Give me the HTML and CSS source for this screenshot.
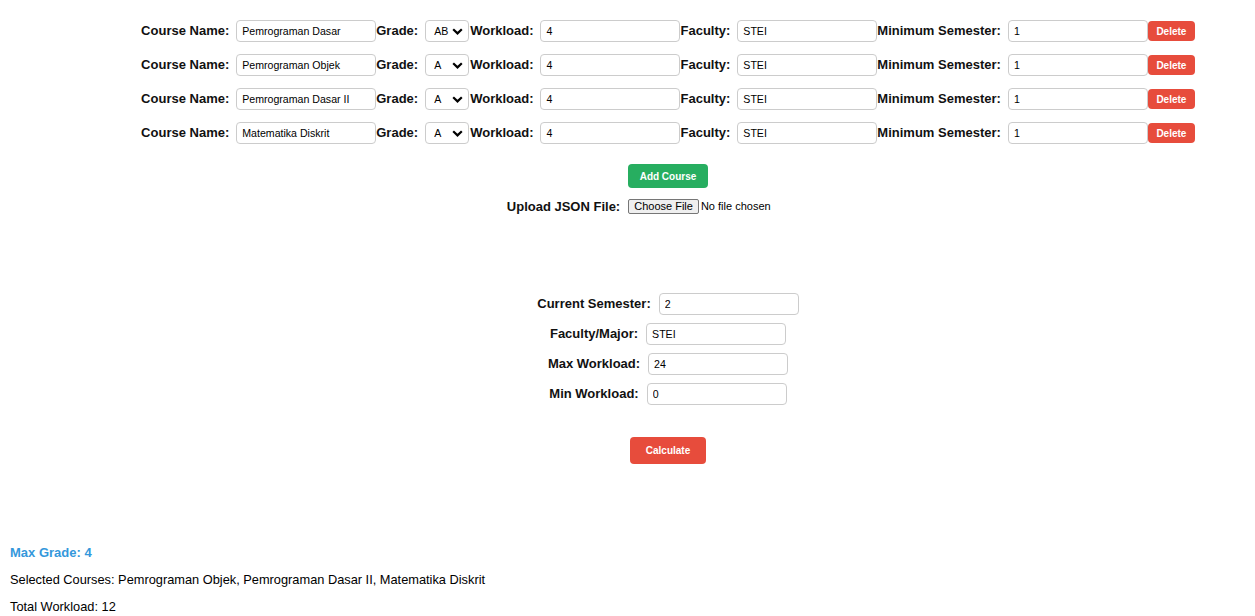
FILE: index.html
```html
<!DOCTYPE html>
<html lang="en">
<head>
<meta charset="utf-8">
<title>Course Planner</title>
<link rel="stylesheet" href="styles.css">
</head>
<body>
<div class="page">
  <div class="courses">
    <div class="course-row">
      <label class="lbl">Course Name:</label><input class="field" type="text" value="Pemrograman Dasar">
      <label class="lbl">Grade:</label><select class="grade"><option>A</option><option selected>AB</option><option>B</option></select>
      <label class="lbl">Workload:</label><input class="field" type="text" value="4">
      <label class="lbl">Faculty:</label><input class="field" type="text" value="STEI">
      <label class="lbl">Minimum Semester:</label><input class="field" type="text" value="1">
      <button class="btn btn-delete">Delete</button>
    </div>
    <div class="course-row">
      <label class="lbl">Course Name:</label><input class="field" type="text" value="Pemrograman Objek">
      <label class="lbl">Grade:</label><select class="grade"><option selected>A</option><option>AB</option><option>B</option></select>
      <label class="lbl">Workload:</label><input class="field" type="text" value="4">
      <label class="lbl">Faculty:</label><input class="field" type="text" value="STEI">
      <label class="lbl">Minimum Semester:</label><input class="field" type="text" value="1">
      <button class="btn btn-delete">Delete</button>
    </div>
    <div class="course-row">
      <label class="lbl">Course Name:</label><input class="field" type="text" value="Pemrograman Dasar II">
      <label class="lbl">Grade:</label><select class="grade"><option selected>A</option><option>AB</option><option>B</option></select>
      <label class="lbl">Workload:</label><input class="field" type="text" value="4">
      <label class="lbl">Faculty:</label><input class="field" type="text" value="STEI">
      <label class="lbl">Minimum Semester:</label><input class="field" type="text" value="1">
      <button class="btn btn-delete">Delete</button>
    </div>
    <div class="course-row">
      <label class="lbl">Course Name:</label><input class="field" type="text" value="Matematika Diskrit">
      <label class="lbl">Grade:</label><select class="grade"><option selected>A</option><option>AB</option><option>B</option></select>
      <label class="lbl">Workload:</label><input class="field" type="text" value="4">
      <label class="lbl">Faculty:</label><input class="field" type="text" value="STEI">
      <label class="lbl">Minimum Semester:</label><input class="field" type="text" value="1">
      <button class="btn btn-delete">Delete</button>
    </div>
  </div>

  <div class="actions">
    <button class="btn btn-add">Add Course</button>
    <div class="upload">
      <label class="lbl lbl-upload">Upload JSON File:</label>
      <span class="file-input"><span class="file-btn">Choose File</span><span class="file-text">No file chosen</span></span>
    </div>
  </div>

  <div class="settings">
    <div class="set-row"><label class="lbl">Current Semester:</label><input class="field" type="text" value="2"></div>
    <div class="set-row"><label class="lbl">Faculty/Major:</label><input class="field" type="text" value="STEI"></div>
    <div class="set-row"><label class="lbl">Max Workload:</label><input class="field" type="text" value="24"></div>
    <div class="set-row"><label class="lbl">Min Workload:</label><input class="field" type="text" value="0"></div>
  </div>

  <div class="calc">
    <button class="btn btn-calc">Calculate</button>
  </div>
</div>

<div class="results">
  <p class="max-grade">Max Grade: 4</p>
  <p class="res-line">Selected Courses: Pemrograman Objek, Pemrograman Dasar II, Matematika Diskrit</p>
  <p class="res-line">Total Workload: 12</p>
</div>
</body>
</html>
```

FILE: styles.css
```css
* { box-sizing: border-box; }

body {
  margin: 0;
  font-family: "Liberation Sans", Arial, sans-serif;
  color: #000;
  background: #fff;
}

.page {
  padding-left: 81px;
  display: flex;
  flex-direction: column;
  align-items: center;
}

.courses {
  padding-top: 20px;
  display: flex;
  flex-direction: column;
  gap: 12px;
}

.course-row {
  display: flex;
  align-items: center;
  height: 22px;
}

.lbl {
  font-size: 13px;
  font-weight: bold;
  margin-right: 7px;
  white-space: nowrap;
  color: #111;
  position: relative;
  top: -1px;
}

.field {
  width: 140px;
  height: 22px;
  border: 1px solid #ccc;
  border-radius: 4px;
  padding: 0 5px;
  font-family: "Liberation Sans", Arial, sans-serif;
  font-size: 10.6px;
  color: #000;
  background: #fff;
  outline: none;
}

.grade {
  appearance: none;
  -webkit-appearance: none;
  width: 44px;
  height: 22px;
  border: 1px solid #ccc;
  border-radius: 4px;
  padding: 0 0 0 8px;
  font-family: "Liberation Sans", Arial, sans-serif;
  font-size: 10.6px;
  color: #000;
  background: #fff url("data:image/svg+xml;utf8,<svg xmlns='http://www.w3.org/2000/svg' width='11' height='7' viewBox='0 0 11 7'><path d='M1.2 1.3 L5.5 5.4 L9.8 1.3' fill='none' stroke='black' stroke-width='2.2'/></svg>") no-repeat right 5px center;
  margin-right: 1px;
}

.btn {
  border: none;
  border-radius: 4px;
  color: #fff;
  font-family: "Liberation Sans", Arial, sans-serif;
  font-weight: bold;
  font-size: 10px;
  cursor: pointer;
}

.btn-delete {
  background: #e74c3c;
  height: 20px;
  padding: 0 8.5px;
}

.actions {
  margin-top: 20px;
  display: flex;
  flex-direction: column;
  align-items: center;
  gap: 10px;
}

.btn-add {
  background: #27ae60;
  height: 24px;
  padding: 0 12px;
}

.upload {
  display: flex;
  align-items: center;
  height: 16px;
}

.lbl-upload {
  margin-right: 8px;
  top: 0;
}

.file-input {
  display: flex;
  align-items: center;
  width: 201px;
  font-size: 11px;
}

.file-btn {
  display: inline-block;
  height: 15px;
  line-height: 13px;
  padding: 0 5px;
  border: 1px solid #767676;
  border-radius: 2px;
  background: #efefef;
  color: #000;
  margin-right: 2px;
}

.file-text {
  color: #000;
}

.settings {
  margin-top: 79px;
  display: flex;
  flex-direction: column;
  align-items: center;
  gap: 8px;
}

.set-row {
  display: flex;
  align-items: center;
  height: 22px;
}

.set-row .lbl {
  margin-right: 8px;
}

.calc {
  margin-top: 32px;
}

.btn-calc {
  background: #e74c3c;
  height: 27px;
  padding: 0 16px;
}

.results {
  margin-top: 81px;
  padding-left: 10px;
  display: flex;
  flex-direction: column;
  gap: 12px;
}

.results p {
  margin: 0;
  line-height: 15px;
}

.max-grade {
  font-size: 13px;
  font-weight: bold;
  color: #3498db;
}

.res-line {
  font-size: 12.8px;
  color: #000;
}
```
